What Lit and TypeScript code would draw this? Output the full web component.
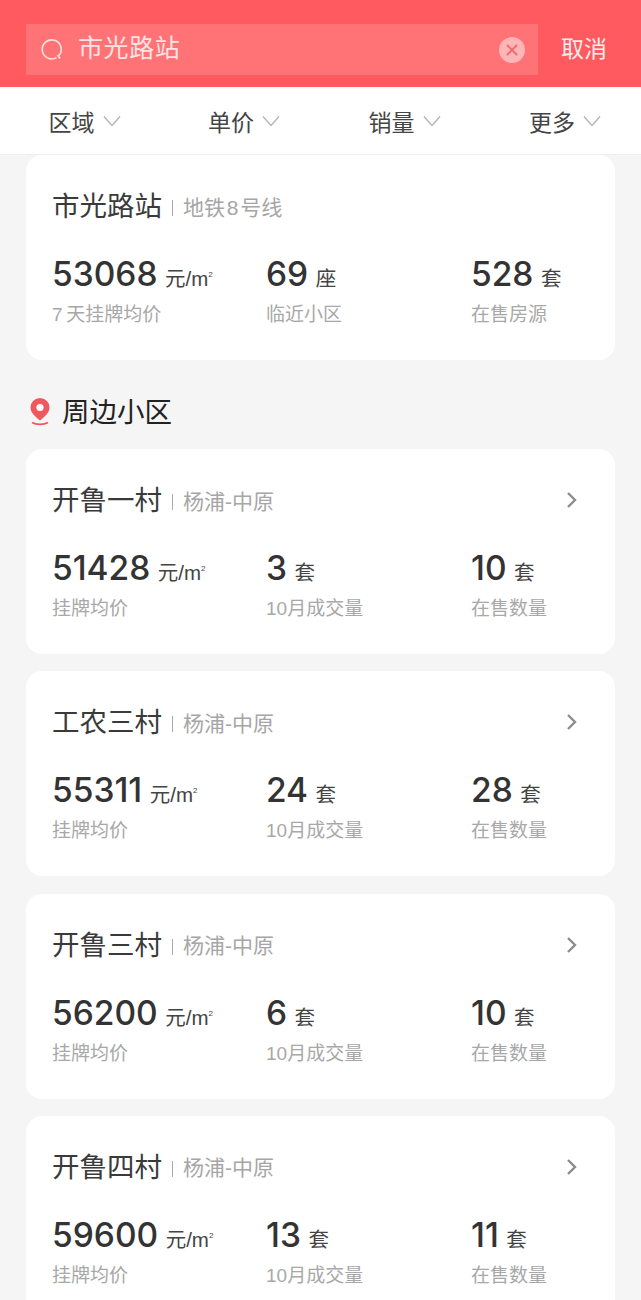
import { LitElement, html, css, svg } from "lit";
import { customElement } from "lit/decorators.js";

interface Stat { v: string; u: string; l: string; }
interface Card { name: string; sub: string; arrow: boolean; stats: Stat[]; }

const hoods: [string, string, string, string][] = [
  ["开鲁一村", "51428", "3", "10"],
  ["工农三村", "55311", "24", "28"],
  ["开鲁三村", "56200", "6", "10"],
  ["开鲁四村", "59600", "13", "11"],
];

@customElement("app-root")
export class AppRoot extends LitElement {
  static styles = css`
    :host {
      display: block;
      width: 641px;
      height: 1300px;
      overflow: hidden;
      background: #f5f5f5;
      font-family: "Liberation Sans", "Noto Sans CJK SC", sans-serif;
      color: #333;
    }
    .head {
      height: 87px;
      box-sizing: border-box;
      background: #fe5a5f;
      padding: 24px 0 12px 26px;
      display: flex;
    }
    .search {
      width: 512px;
      height: 51px;
      background: #ff7376;
      display: flex;
      align-items: center;
      padding: 0 13px 0 14px;
      box-sizing: border-box;
      color: #fde3e3;
      font-size: 25px;
      letter-spacing: 0.6px;
    }
    .search .q { width: 25px; height: 25px; margin-right: 13px; flex: none; }
    .search .txt { flex: 1; line-height: 51px; margin-top: -3px; }
    .search .x { width: 26px; height: 26px; flex: none; }
    .cancel {
      flex: 1;
      color: #fdecec;
      font-size: 23px;
      line-height: 51px;
      padding-left: 23px;
    }
    .filters {
      height: 68px;
      background: #fff;
      display: grid;
      grid-template-columns: 159.5px 160.5px 160.5px 1fr;
      padding-left: 48.5px;
      align-items: center;
      border-bottom: 1px solid #efefef;
      box-sizing: border-box;
    }
    .f { display: flex; align-items: center; font-size: 23px; color: #444; }
    .f svg { width: 18px; height: 12px; margin-left: 8px; margin-top: 1px; }
    .list { padding: 0 26px; }
    .card {
      background: #fff;
      border-radius: 16px;
      height: 205px;
      box-sizing: border-box;
      padding: 32px 26px 0;
      margin-bottom: 17.34px;
    }
    .card.first { margin-bottom: 35px; }
    .titlerow { display: flex; align-items: center; height: 40px; }
    .name { font-size: 27.5px; color: #3a3a3a; line-height: 40px; }
    .sep { width: 1px; height: 16px; background: #aaa; margin: 2px 10px 0 10px; flex: none; }
    .sub { font-size: 21px; color: #a6a6a6; margin-top: -3px; }
    .chev { margin-left: auto; width: 12px; height: 18px; margin-right: 11px; margin-top: -2px; flex: none; }
    .stats { display: grid; grid-template-columns: 214px 205px 1fr; margin-top: 27px; }
    .num { display: flex; align-items: baseline; height: 40px; line-height: 40px; white-space: nowrap; }
    .v { font-family: Inter, "Liberation Sans", sans-serif; font-size: 33.5px; font-weight: 500; color: #333; }
    .u { font-size: 20.5px; color: #444; margin-left: 7.5px; }
    .u sup { font-size: 8px; line-height: 0; vertical-align: 9px; }
    .l { font-size: 19px; color: #a8a8a8; line-height: 26px; margin-top: 8px; }
    .sect { display: flex; align-items: center; height: 30px; margin: 0 0 24px 3px; font-size: 27.5px; color: #222; }
    .sect svg { width: 22px; height: 29px; margin-right: 11px; margin-top: 2px; flex: none; }
  `;

  stat(s: Stat) {
    return html`<div>
      <div class="num"><span class="v">${s.v}</span><span class="u">${s.u === "元/m" ? html`元/m<sup>2</sup>` : s.u}</span></div>
      <div class="l">${s.l}</div>
    </div>`;
  }

  card(c: Card, first = false) {
    return html`<div class="card ${first ? "first" : ""}">
      <div class="titlerow">
        <span class="name">${c.name}</span><span class="sep"></span><span class="sub">${c.sub}</span>
        ${c.arrow
          ? html`<svg class="chev" viewBox="0 0 12 18"><path d="M2 2l7 7-7 7" fill="none" stroke="#8c8c8c" stroke-width="2.4"/></svg>`
          : ""}
      </div>
      <div class="stats">${c.stats.map((s) => this.stat(s))}</div>
    </div>`;
  }

  render() {
    const chevDown = svg`<path d="M1 1.5l8 9 8-9" fill="none" stroke="#b5b5b5" stroke-width="1.4"/>`;
    return html`
      <div class="head">
        <div class="search">
          <svg class="q" viewBox="0 0 25 25"><path d="M16.5 20.6A9.5 9.5 0 1 1 19 18.5" fill="none" stroke="#fde3e3" stroke-width="1.6"/><path d="M17.5 18l2.5 3.5" stroke="#fde3e3" stroke-width="1.6"/></svg>
          <span class="txt">市光路站</span>
          <svg class="x" viewBox="0 0 26 26"><circle cx="13" cy="13" r="13" fill="#fdb5b6"/><path d="M8 8l10 10M18 8L8 18" stroke="#f0696c" stroke-width="1.8"/></svg>
        </div>
        <div class="cancel">取消</div>
      </div>
      <div class="filters">
        ${["区域", "单价", "销量", "更多"].map(
          (t) => html`<div class="f">${t}<svg viewBox="0 0 18 12">${chevDown}</svg></div>`
        )}
      </div>
      <div class="list">
        ${this.card(
          {
            name: "市光路站",
            sub: "地铁\u200a8\u200a号线",
            arrow: false,
            stats: [
              { v: "53068", u: "元/m", l: "7\u2009天挂牌均价" },
              { v: "69", u: "座", l: "临近小区" },
              { v: "528", u: "套", l: "在售房源" },
            ],
          },
          true
        )}
        <div class="sect">
          <svg viewBox="0 0 22 29">
            <path d="M11 1a9.5 9.5 0 0 0-9.5 9.5C1.5 16.5 8 21 11 23.5c3-2.5 9.5-7 9.5-13A9.5 9.5 0 0 0 11 1z" fill="#f0585f"/>
            <circle cx="11" cy="10.5" r="3.6" fill="#fff"/>
            <path d="M3 25.5c4 2.6 12 2.6 16 0" fill="none" stroke="#f0585f" stroke-width="1.8"/>
          </svg>
          周边小区
        </div>
        ${hoods.map(([name, price, sold, onSale]) =>
          this.card({
            name,
            sub: "杨浦-中原",
            arrow: true,
            stats: [
              { v: price, u: "元/m", l: "挂牌均价" },
              { v: sold, u: "套", l: "10月成交量" },
              { v: onSale, u: "套", l: "在售数量" },
            ],
          })
        )}
      </div>
    `;
  }
}
